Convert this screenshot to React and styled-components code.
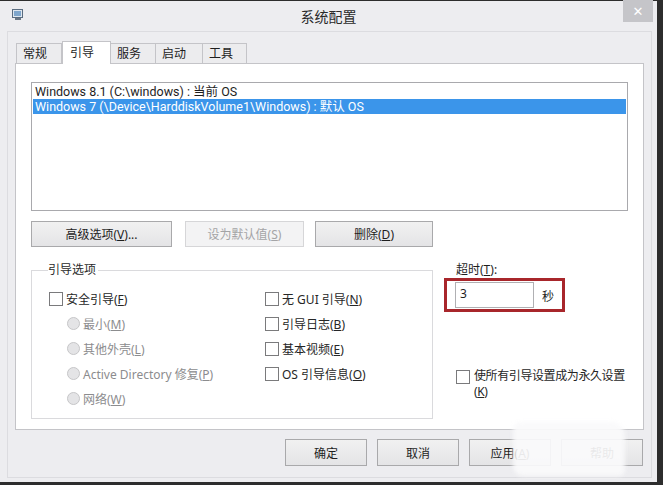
import React from "react";
import styled, { createGlobalStyle } from "styled-components";

const GlobalStyle = createGlobalStyle`
  body {
    margin: 0;
    background: #2d2d2d;
    font-family: "Noto Sans", "Noto Sans CJK SC", sans-serif;
    font-size: 12px;
    color: #1e1e1e;
  }
`;

const Screen = styled.div`
  width: 663px;
  height: 485px;
  background: #2d2d2d;
  overflow: hidden;
`;

const Window = styled.div`
  position: relative;
  width: 657px;
  height: 481px;
  margin-top: 1px;
  background: #ededf0;
  display: flex;
  flex-direction: column;
`;

const TitleBar = styled.div`
  height: 30px;
  display: flex;
  align-items: center;
  justify-content: center;
  position: relative;
  font-size: 14px;
  color: #2a2a2a;
`;

const AppIcon = styled.svg`
  position: absolute;
  left: 12px;
  top: 8px;
`;

const CloseButton = styled.div`
  position: absolute;
  right: 4px;
  top: -1px;
  width: 30px;
  height: 22px;
  background: #c5c5c9;
  color: #fff;
  display: flex;
  align-items: center;
  justify-content: center;
  font-size: 13px;
  font-family: "DejaVu Sans", sans-serif;
`;

const Client = styled.div`
  flex: 1;
  margin: 0 5px 4px 7px;
  border: 1px solid #dcdce0;
  padding: 8px 8px 0 7px;
  display: flex;
  flex-direction: column;
`;

const TabStrip = styled.div`
  display: flex;
  align-items: flex-end;
  height: 23px;
  padding-left: 1px;
`;

const Tab = styled.div`
  height: ${(p) => (p.$active ? "23px" : "20px")};
  width: ${(p) => p.$w}px;
  box-sizing: border-box;
  border: 1px solid #c4c4c8;
  border-bottom: none;
  border-left: ${(p) => (p.$first || p.$active ? "1px solid #c4c4c8" : "none")};
  background: ${(p) => (p.$active ? "#fff" : "#ececee")};
  padding-left: ${(p) => (p.$active ? 7 : 6)}px;
  padding-top: ${(p) => (p.$active ? 2 : 1)}px;
  margin-bottom: ${(p) => (p.$active ? "-1px" : "0")};
  position: relative;
  z-index: ${(p) => (p.$active ? 1 : 0)};
  line-height: 17px;
`;

const TabPage = styled.div`
  width: 629px;
  height: 367px;
  box-sizing: border-box;
  background: #fff;
  border: 1px solid #c4c4c8;
  padding: 18px 15px 0 15px;
  display: flex;
  flex-direction: column;
`;

const ListBox = styled.div`
  height: 129px;
  box-sizing: border-box;
  border: 1px solid #a9a9ad;
  padding: 1px;
  display: flex;
  flex-direction: column;
`;

const ListItem = styled.div`
  height: 15px;
  line-height: 15px;
  padding-left: 2px;
  overflow: hidden;
  font-family: Roboto, "Noto Sans CJK SC", sans-serif;
  font-size: 12.5px;
  background: ${(p) => (p.$selected ? "#3b95ea" : "transparent")};
  color: ${(p) => (p.$selected ? "#fff" : "#1e1e1e")};
  white-space: nowrap;
`;

const ButtonRow = styled.div`
  display: flex;
  gap: ${(p) => p.$gap || 12}px;
  margin-top: ${(p) => p.$top || 0}px;
  justify-content: ${(p) => (p.$end ? "flex-end" : "flex-start")};
`;

const Button = styled.div`
  width: ${(p) => p.$w}px;
  height: ${(p) => p.$h || 26}px;
  box-sizing: border-box;
  border: 1px solid ${(p) => (p.$disabled ? "#d6d6d8" : "#a9a9ab")};
  background: ${(p) =>
    p.$disabled ? "#f3f3f4" : "linear-gradient(#f1f1f1, #e4e4e6)"};
  color: ${(p) => (p.$disabled ? "#a4a4a6" : "#1e1e1e")};
  display: flex;
  align-items: center;
  justify-content: center;
  white-space: nowrap;
`;

const U = styled.span`
  text-decoration: underline;
`;

const Lower = styled.div`
  display: flex;
  margin-top: 15px;
`;

const GroupBox = styled.fieldset`
  margin: 0;
  width: 402px;
  height: 157px;
  box-sizing: border-box;
  border: 1px solid #dadadd;
  padding: 12px 0 0 17px;
  display: grid;
  grid-template-columns: 216px 1fr;
  align-content: start;
`;

const Legend = styled.legend`
  padding: 0 2px 0 0;
  margin-left: -1px;
  line-height: 16px;
  color: #2a2a2a;
`;

const Column = styled.div`
  display: flex;
  flex-direction: column;
  gap: 8px;
`;

const Option = styled.div`
  display: flex;
  align-items: center;
  gap: 3px;
  height: 17px;
  padding-left: ${(p) => p.$indent || 0}px;
  color: ${(p) => (p.$disabled ? "#8c8c8e" : "#262626")};
  white-space: nowrap;
`;

const Check = styled.span`
  width: 12px;
  height: 12px;
  border: 1px solid #7a7a7c;
  background: #fff;
  flex: none;
`;

const Radio = styled.span`
  width: 11px;
  height: 11px;
  border-radius: 50%;
  border: 1px solid #c6c6c8;
  background: #e4e4e6;
  flex: none;
`;

const Side = styled.div`
  display: flex;
  flex-direction: column;
  padding-left: 23px;
`;

const Label = styled.div`
  line-height: 16px;
`;

const Highlight = styled.div`
  width: 121px;
  height: 34px;
  box-sizing: border-box;
  border: 3px solid #a8262b;
  margin: 0 0 0 -12px;
  padding: 1px 0 0 8px;
  display: flex;
  align-items: center;
  gap: 8px;
`;

const Field = styled.div`
  width: 79px;
  height: 26px;
  box-sizing: border-box;
  border: 1px solid #b0b0b3;
  background: #fff;
  padding: 2px 0 0 4px;
  margin-top: -1px;
`;

const Permanent = styled.div`
  display: flex;
  gap: 4px;
  margin-top: 56px;
  line-height: 16px;
  color: #262626;
  white-space: nowrap;
  letter-spacing: -0.4px;
`;

const Footer = styled.div`
  padding-top: 9px;
`;

const Smudge = styled.div`
  position: absolute;
  left: 513px;
  top: 421px;
  width: 112px;
  height: 54px;
  background: rgba(250, 250, 251, 0.92);
  border-radius: 8px 14px 6px 10px;
  filter: blur(2px);
`;

const CheckOption = ({ children }) => (
  <Option>
    <Check />
    <span>{children}</span>
  </Option>
);

const RadioOption = ({ children }) => (
  <Option $indent={18} $disabled>
    <Radio />
    <span>{children}</span>
  </Option>
);

export default function App() {
  return (
    <Screen>
      <GlobalStyle />
      <Window>
        <TitleBar>
          <AppIcon width="11" height="12" viewBox="0 0 11 12">
            <rect x="0.5" y="0.5" width="10" height="8" fill="#dfe7ef" stroke="#5a6c80" />
            <rect x="2" y="2" width="7" height="5" fill="#7fa6cc" />
            <rect x="3" y="9" width="6" height="2" fill="#6b7785" />
          </AppIcon>
          系统配置
          <CloseButton>✕</CloseButton>
        </TitleBar>
        <Client>
          <TabStrip>
            <Tab $w={46} $first>常规</Tab>
            <Tab $w={49} $active>引导</Tab>
            <Tab $w={45}>服务</Tab>
            <Tab $w={47}>启动</Tab>
            <Tab $w={44}>工具</Tab>
          </TabStrip>
          <TabPage>
            <ListBox>
              <ListItem>Windows 8.1 (C:\windows) : 当前 OS</ListItem>
              <ListItem $selected>
                Windows 7 (\Device\HarddiskVolume1\Windows) : 默认 OS
              </ListItem>
            </ListBox>
            <ButtonRow $top={10} $gap={13}>
              <Button $w={141}>
                <span>高级选项(<U>V</U>)...</span>
              </Button>
              <Button $w={119} $disabled>
                <span>设为默认值(<U>S</U>)</span>
              </Button>
              <Button $w={118} style={{ marginLeft: -2 }}>
                <span>删除(<U>D</U>)</span>
              </Button>
            </ButtonRow>
            <Lower>
              <GroupBox>
                <Legend>引导选项</Legend>
                <Column>
                  <CheckOption>安全引导(<U>F</U>)</CheckOption>
                  <RadioOption>最小(<U>M</U>)</RadioOption>
                  <RadioOption>其他外壳(<U>L</U>)</RadioOption>
                  <RadioOption>Active Directory 修复(<U>P</U>)</RadioOption>
                  <RadioOption>网络(<U>W</U>)</RadioOption>
                </Column>
                <Column>
                  <CheckOption>无 GUI 引导(<U>N</U>)</CheckOption>
                  <CheckOption>引导日志(<U>B</U>)</CheckOption>
                  <CheckOption>基本视频(<U>E</U>)</CheckOption>
                  <CheckOption>OS 引导信息(<U>O</U>)</CheckOption>
                </Column>
              </GroupBox>
              <Side>
                <Label>
                  超时(<U>T</U>):
                </Label>
                <Highlight>
                  <Field>3</Field>
                  <span>秒</span>
                </Highlight>
                <Permanent>
                  <Check style={{ marginTop: 2 }} />
                  <div>
                    使所有引导设置成为永久设置
                    <br />(<U>K</U>)
                  </div>
                </Permanent>
              </Side>
            </Lower>
          </TabPage>
          <Footer>
            <ButtonRow $end $gap={10}>
              <Button $w={82} $h={27}>确定</Button>
              <Button $w={82} $h={27}>取消</Button>
              <Button $w={82} $h={27}>
                <span>应用(<U>A</U>)</span>
              </Button>
              <Button $w={82} $h={27}>帮助</Button>
            </ButtonRow>
          </Footer>
        </Client>
        <Smudge />
      </Window>
    </Screen>
  );
}
